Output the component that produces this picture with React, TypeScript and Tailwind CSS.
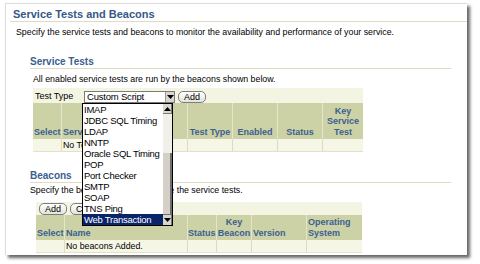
const Tri = ({ up }: { up?: boolean }) => (
  <svg width="7" height="4" viewBox="0 0 7 4">
    <path d={up ? "M0 4 L3.5 0 L7 4Z" : "M0 0 L7 0 L3.5 4Z"} fill="#000" />
  </svg>
);

const options = [
  "IMAP",
  "JDBC SQL Timing",
  "LDAP",
  "NNTP",
  "Oracle SQL Timing",
  "POP",
  "Port Checker",
  "SMTP",
  "SOAP",
  "TNS Ping",
  "Web Transaction",
];

const PillButton = ({ label }: { label: string }) => (
  <div className="h-[12px] px-[5px] flex items-center rounded-[5px] border border-[#7d7d7d] bg-gradient-to-b from-white to-[#e4e4dc] text-[9px] leading-[10px]">
    {label}
  </div>
);

export default function App() {
  return (
    <div className="relative w-[480px] h-[264px] bg-white overflow-hidden pt-[3px] pl-[5px] font-['Liberation_Sans',Arial,sans-serif] text-black">
      <div className="w-[462px] h-[252px] border-l border-t border-[#dcdcdc] bg-white shadow-[3px_3px_3px_rgba(0,0,0,0.6)]">
        {/* page title */}
        <div className="ml-[4px] h-[18px] pt-[3px] pl-[3px] border-b border-[#dedbc0] text-[11px] leading-[14px] font-bold text-[#35588a]">
          Service Tests and Beacons
        </div>
        <div className="mt-[5px] ml-[10px] text-[8.8px] leading-[11px]">
          Specify the service tests and beacons to monitor the availability and performance of your service.
        </div>

        {/* service tests */}
        <div className="mt-[18px] ml-[24px] mr-[16px] h-[13px] border-b border-[#dedbc0] text-[10px] leading-[12px] font-bold text-[#3a6090]">
          Service Tests
        </div>
        <div className="mt-[5px] ml-[27px] text-[8.8px] leading-[11px]">
          All enabled service tests are run by the beacons shown below.
        </div>
        <div className="mt-[3px] ml-[27px] w-[330px]">
          <div className="h-[15px] bg-[#f4f4e2] flex items-end gap-[2px]">
            <span className="ml-[2px] w-[47px] self-center pt-[2px] text-[9px] leading-[11px]">Test Type</span>
            <div className="w-[91px] h-[12px] flex border border-[#7a7a7a] bg-white">
              <span className="flex-1 pl-[2px] text-[9.5px] leading-[10px] tracking-[-0.2px]">Custom Script</span>
              <div className="w-[9px] flex items-center justify-center bg-[#d8d6cf] border-l border-[#9a9a9a]">
                <Tri />
              </div>
            </div>
            <div className="ml-[1px]">
              <PillButton label="Add" />
            </div>
          </div>
          <div className="h-[36px] bg-[#cdd2a6] grid grid-cols-[29px_126px_45px_45px_45px_40px] text-[9px] leading-[10.5px] font-bold text-[#3a6090]">
            <div className="flex items-end pl-[1px] pb-[2px] border-r border-[#e4e6cc]">Select</div>
            <div className="flex items-end pl-[1px] pb-[2px] border-r border-[#e4e6cc]">Service Test</div>
            <div className="flex items-end justify-center pb-[2px] border-r border-[#e4e6cc]">Test Type</div>
            <div className="flex items-end justify-center pb-[2px] border-r border-[#e4e6cc]">Enabled</div>
            <div className="flex items-end justify-center pb-[2px] border-r border-[#e4e6cc]">Status</div>
            <div className="flex items-end justify-center text-center pb-[2px]">
              Key
              <br />
              Service
              <br />
              Test
            </div>
          </div>
          <div className="h-[13px] bg-[#f6f6e6] grid grid-cols-[29px_126px_45px_45px_45px_40px] border-b border-[#e2e2c8] text-[8.8px] leading-[12px]">
            <div className="border-r border-[#dcdcc0]" />
            <div className="pl-[1px] border-r border-[#dcdcc0]">No Tests Added.</div>
            <div className="border-r border-[#dcdcc0]" />
            <div className="border-r border-[#dcdcc0]" />
            <div className="border-r border-[#dcdcc0]" />
            <div />
          </div>
        </div>

        {/* beacons */}
        <div className="mt-[18px] ml-[24px] mr-[16px] h-[13px] border-b border-[#dedbc0] text-[10px] leading-[12px] font-bold text-[#3a6090]">
          Beacons
        </div>
        <div className="mt-[2px] ml-[24px] text-[8.8px] leading-[11px]">
          Specify the beacons that will execute the service tests.
        </div>
        <div className="mt-[6px] ml-[30px] w-[326px]">
          <div className="h-[13px] bg-[#f4f4e2] flex items-center gap-[3px] pl-[3px]">
            <PillButton label="Add" />
            <PillButton label="Create..." />
          </div>
          <div className="h-[25px] bg-[#cdd2a6] grid grid-cols-[29px_123px_29px_35px_55px_55px] text-[9px] leading-[10.5px] font-bold text-[#3a6090]">
            <div className="flex items-end pl-[1px] pb-[2px] border-r border-[#e4e6cc]">Select</div>
            <div className="flex items-end pl-[1px] pb-[2px] border-r border-[#e4e6cc]">Name</div>
            <div className="flex items-end pb-[2px] border-r border-[#e4e6cc]">Status</div>
            <div className="flex items-end justify-center text-center pb-[2px] border-r border-[#e4e6cc]">
              Key
              <br />
              Beacon
            </div>
            <div className="flex items-end pl-[1px] pb-[2px] border-r border-[#e4e6cc]">Version</div>
            <div className="flex items-end pl-[1px] pb-[2px]">
              Operating
              <br />
              System
            </div>
          </div>
          <div className="h-[13px] bg-[#f6f6e6] grid grid-cols-[29px_123px_29px_35px_55px_55px] border-b border-[#e2e2c8] text-[8.8px] leading-[12px]">
            <div className="border-r border-[#dcdcc0]" />
            <div className="pl-[1px] border-r border-[#dcdcc0]">No beacons Added.</div>
            <div className="border-r border-[#dcdcc0]" />
            <div className="border-r border-[#dcdcc0]" />
            <div className="border-r border-[#dcdcc0]" />
            <div />
          </div>
        </div>
      </div>

      {/* open select list */}
      <div className="absolute left-[82px] top-[103px] w-[91px] h-[123px] z-10 flex border border-black bg-white">
        <div className="w-[80px]">
          {options.map((o) => (
            <div
              key={o}
              className={`h-[11px] pl-[1px] text-[9.5px] leading-[11px] tracking-[-0.25px] whitespace-nowrap ${
                o === "Web Transaction" ? "bg-[#0a246a] text-white" : ""
              }`}
            >
              {o}
            </div>
          ))}
        </div>
        <div className="w-[9px] flex flex-col bg-[#f1efe9]">
          <div className="h-[10px] flex items-center justify-center bg-[#d8d6cf] border-r border-b border-[#7a7a7a]">
            <Tri up />
          </div>
          <div className="flex-1 flex flex-col justify-end">
            <div className="h-[62px] bg-[#d4d0c8] border-r-2 border-b border-[#6f6f6f]" />
          </div>
          <div className="h-[10px] flex items-center justify-center bg-[#d8d6cf] border-r border-[#7a7a7a]">
            <Tri />
          </div>
        </div>
      </div>
    </div>
  );
}
